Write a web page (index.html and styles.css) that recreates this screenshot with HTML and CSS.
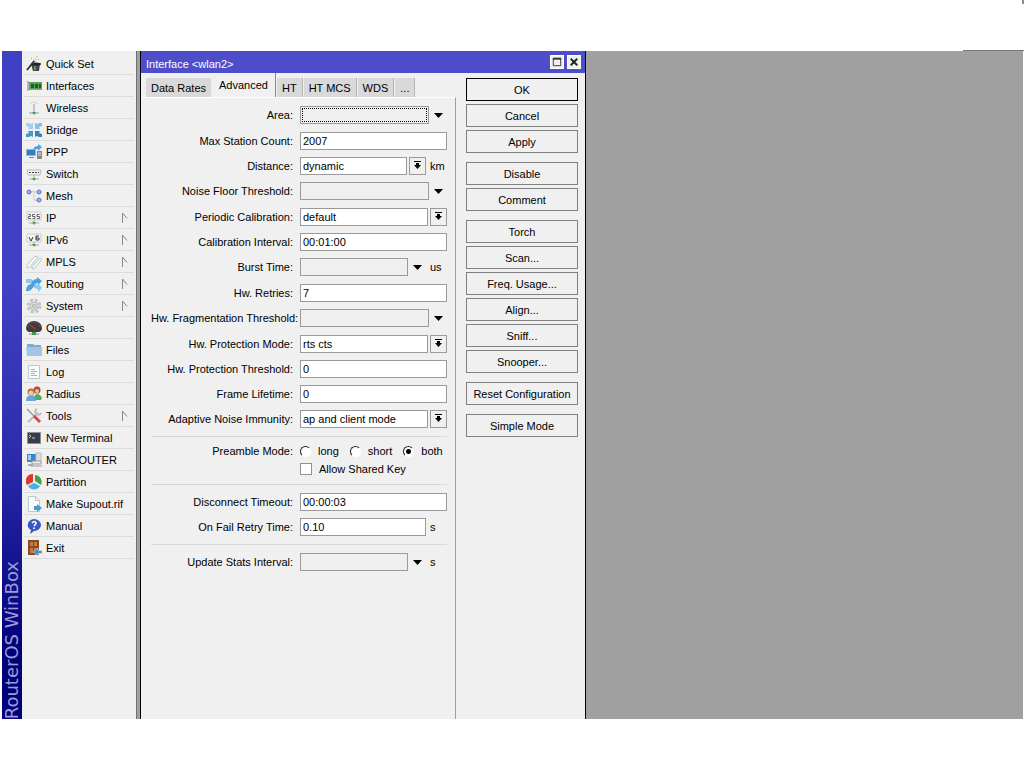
FILE: index.html
```html
<!DOCTYPE html>
<html lang="en">
<head>
    <meta charset="UTF-8">
    <meta name="viewport" content="width=device-width, initial-scale=1.0">
    <title>RouterOS WinBox</title>
    <link rel="stylesheet" href="styles.css">
</head>
<body>
    <svg class="defs" aria-hidden="true">
        <symbol id="drop" viewBox="0 0 9 9">
            <path d="M1 0h7v1H1zM3 2h3v2H3z"/>
            <path d="M1 4h7L4.500 8z"/>
        </symbol>
        <symbol id="down" viewBox="0 0 9 5"><path d="M0 0h9L4.500 5z"/></symbol>
        <symbol id="sub" viewBox="0 0 6 12"><path d="M.5 11V1L5 6.500" fill="none" stroke="#888"/></symbol>
    </svg>
    <header class="top"></header>
    <main class="app">
        <div class="brand"><span>RouterOS WinBox</span></div>
        <nav class="menu">
            <ul>
                <li><a href="#"><svg viewBox="0 0 16 16"><path d="M5 8h9l-1 7H7z" fill="#444"/><ellipse cx="10" cy="8" rx="5" ry="1.500" fill="#222"/><path d="M1 14L9 4" stroke="#333" stroke-width="2"/><path d="M8 5l2-3" stroke="#ddd" stroke-width="2"/><path d="M9 10v4" stroke="#bbb"/><path d="M5 2l1 1M13 3l-1 1M11 0v1" stroke="#c9a640"/></svg>Quick Set</a></li>
                <li><a href="#"><svg viewBox="0 0 16 16"><path d="M1 3h2v10H1z" fill="#b5b5b5"/><path d="M3 4h13v8H3z" fill="#5aa05a"/><path d="M5 6h3v4H5zM9 6h3v4H9zM13 6h2v4h-2z" fill="#1c5d24"/><path d="M4 11.500h11" stroke="#a9c67b" stroke-dasharray="1 1"/></svg>Interfaces</a></li>
                <li><a href="#"><svg viewBox="0 0 16 16"><path d="M8 4v8" stroke="#999"/><path d="M5 4q3-4 6 0" fill="none" stroke="#ccc"/><path d="M3 13h10" stroke="#999"/><path d="M6 12h4l-2 3z" fill="#4a9a5a"/></svg>Wireless</a></li>
                <li><a href="#"><svg viewBox="0 0 16 16"><path d="M0 1h3l2 1 2-1v6H2l1-2-3-1z" fill="#9fd0ee"/><path d="M16 1h-3l-2 1-2-1v6h5l-1-2 3-1z" fill="#86c0e6"/><path d="M0 15h3l2-1 2 1V9H2l1 2-3 1z" fill="#4a97cc"/><path d="M16 15h-3l-2-1-2 1V9h5l-1 2 3 1z" fill="#3583bd"/></svg>Bridge</a></li>
                <li><a href="#"><svg viewBox="0 0 16 16"><path d="M0 5h10v7H0z" fill="#9fb4c8"/><path d="M1 6h8v5H1z" fill="#2f7fc4"/><path d="M3 13h5v1H3z" fill="#888"/><path d="M11 7h5v8h-5z" fill="#888"/><path d="M12 9h3M12 11h3" stroke="#ddd"/><path d="M7 6q1-4 5-4V0l4 3-4 4V5q-3 0-5 1z" fill="#4da3dd"/></svg>PPP</a></li>
                <li><a href="#"><svg viewBox="0 0 16 16"><path d="M1 4h14l-1 5H2z" fill="#f0f0f0" stroke="#bbb"/><path d="M3 6.500h10" stroke="#444" stroke-dasharray="2 1"/><path d="M8 9v4M3 13h10" stroke="#aaa"/><path d="M6 12h4l-2 3z" fill="#4a9a5a"/></svg>Switch</a></li>
                <li><a href="#"><svg viewBox="0 0 16 16"><path d="M4 4l4-1v9l5 1M8 4h4" fill="none" stroke="#ccc"/><g fill="#9fb0ec" stroke="#5a72c8"><circle cx="3" cy="4" r="2"/><circle cx="13" cy="4" r="2"/><circle cx="13" cy="12" r="2"/></g></svg>Mesh</a></li>
                <li><a href="#"><svg viewBox="0 0 16 16"><path d="M1 2h14v8H1z" fill="#f4f4f4" stroke="#ccc"/><path d="M2.500 4.500h2v2h-2v2h2.500M9 4.500H6.500v2H9v2H6.500M13.500 4.500H11v2h2.500v2H11" fill="none" stroke="#666"/><path d="M8 10v3M3 13h10" stroke="#aaa"/><path d="M6 12h4l-2 3z" fill="#4a9a5a"/></svg>IP</a><svg class="sub"><use href="#sub"/></svg></li>
                <li><a href="#"><svg viewBox="0 0 16 16"><path d="M1 2h14v8H1z" fill="#f4f4f4" stroke="#ccc"/><path d="M3 5l2 4 2-4M13 4h-3v4h3V6h-3" fill="none" stroke="#333"/><path d="M8 10v3M3 13h10" stroke="#aaa"/><path d="M6 12h4l-2 3z" fill="#4a9a5a"/></svg>IPv6</a><svg class="sub"><use href="#sub"/></svg></li>
                <li><a href="#"><svg viewBox="0 0 16 16"><path d="M1 11L9 2l3 1-8 10-3 1zM6 13l8-9 2 1-7 9-3 1z" fill="#f4f8f8" stroke="#b5ccc8"/></svg>MPLS</a><svg class="sub"><use href="#sub"/></svg></li>
                <li><a href="#"><svg viewBox="0 0 16 16"><path d="M0 3h5q3 1 4 5l3 1V7l4 5-4 4v-3q-4 0-5-4Q5 7 4 7H0z" fill="#8cc8ee"/><path d="M0 15q0-6 5-7 2-5 6-5V1l5 4-4 4V7q-3 0-4 3-3 6-8 5z" fill="#4a9fdc"/></svg>Routing</a><svg class="sub"><use href="#sub"/></svg></li>
                <li><a href="#"><svg viewBox="0 0 16 16"><circle cx="8" cy="8" r="6" fill="none" stroke="#c4c4c4" stroke-width="3" stroke-dasharray="3 1.700"/><circle cx="8" cy="8" r="4" fill="#d8d8d8" stroke="#bbb"/><circle cx="8" cy="8" r="1.500" fill="#eee" stroke="#aaa"/></svg>System</a><svg class="sub"><use href="#sub"/></svg></li>
                <li><a href="#"><svg viewBox="0 0 16 16"><path d="M0 8a8 7 0 0 1 16 0q0 3-3 4H3Q0 11 0 8z" fill="#443c3c"/><path d="M2 7a6 5 0 0 1 12 0" fill="none" stroke="#888" stroke-dasharray="1 2"/><path d="M4 5l5 4" stroke="#c44"/><path d="M3 14h10" stroke="#888"/><path d="M6 12h4v3H6z" fill="#3a9a4a"/></svg>Queues</a></li>
                <li><a href="#"><svg viewBox="0 0 16 16"><path d="M1 2h6l1 1h7v11H1z" fill="#7fa9cf"/><path d="M0 5h16v9H1z" fill="#a3c5e2"/></svg>Files</a></li>
                <li><a href="#"><svg viewBox="0 0 16 16"><path d="M2.500 1.500h11v13h-11z" fill="#fbfdfd" stroke="#b5cccc"/><path d="M5 5.500h4M5 7.500h6M5 9.500h4M5 11.500h6" stroke="#8ac0c0"/></svg>Log</a></li>
                <li><a href="#"><svg viewBox="0 0 16 16"><path d="M8 14q0-6 3-6t5 4l-1 2z" fill="#4fae58"/><circle cx="11" cy="4" r="3.500" fill="#b8402c"/><circle cx="11" cy="5" r="2" fill="#f0bd94"/><path d="M0 15q0-6 5-6t5 6z" fill="#69a5dc"/><circle cx="5" cy="6" r="3.500" fill="#a07030"/><circle cx="5" cy="7" r="2.500" fill="#f2c99c"/></svg>Radius</a></li>
                <li><a href="#"><svg viewBox="0 0 16 16"><path d="M2 14L12 5" stroke="#bbb" stroke-width="2"/><path d="M11 1a3 3 0 1 0 4 4" fill="none" stroke="#bbb" stroke-width="2"/><path d="M1 1l8 8" stroke="#999" stroke-width="1.500"/><path d="M8 8l6 6" stroke="#d34a4a" stroke-width="3"/></svg>Tools</a><svg class="sub"><use href="#sub"/></svg></li>
                <li><a href="#"><svg viewBox="0 0 16 16"><path d="M1.500 2.500h13v11h-13z" fill="#3a3d48" stroke="#8a8d98"/><path d="M3 5l2 1-2 2M6 8h3" fill="none" stroke="#ccc"/></svg>New Terminal</a></li>
                <li><a href="#"><svg viewBox="0 0 16 16"><path d="M1 2h9v8H1z" fill="#3a86cc"/><path d="M2 3h3v5H2z" fill="#9fd0f4"/><path d="M10 1h5v9h-5z" fill="#ddd" stroke="#bbb"/><path d="M6 9h9v3H6z" fill="#eee" stroke="#999"/><path d="M2 12h5v2H2z" fill="#aaa"/><path d="M5 14h11" stroke="#999"/></svg>MetaROUTER</a></li>
                <li><a href="#"><svg viewBox="0 0 16 16"><path d="M7 8V0a7 7 0 0 0-6 11z" fill="#d9392e"/><path d="M9 7V1a7 7 0 0 1 6 10z" fill="#3aa648"/><path d="M8 9l6 3a7 7 0 0 1-12 0z" fill="#48b0e0"/></svg>Partition</a></li>
                <li><a href="#"><svg viewBox="0 0 16 16"><path d="M2.500.5h7l4 4v11h-11z" fill="#fbfdfd" stroke="#b5cccc"/><path d="M9.500.5v4h4" fill="none" stroke="#b5cccc"/><path d="M8 10h3V8l5 4-5 4v-2H8z" fill="#3f9fcf"/></svg>Make Supout.rif</a></li>
                <li><a href="#"><svg viewBox="0 0 16 16"><path d="M8 1a7 6 0 1 1 0 12l-4 3 1-4A7 6 0 0 1 8 1z" fill="#3558c4"/><path d="M6 5q2.500-3 4 0 0 1-2 3M8 9.500v1.500" fill="none" stroke="#fff" stroke-width="1.700"/></svg>Manual</a></li>
                <li><a href="#"><svg viewBox="0 0 16 16"><path d="M2 0h11v15H2z" fill="#8a4a20"/><path d="M4 2h3v4H4zM8 2h3v4H8zM4 8h3v5H4zM8 8h3v5H8z" fill="#c07a45"/><path d="M16 10.500h-4V8l-5 4 5 4v-2.500h4z" fill="#3c8fc8" stroke="#e8f4fb" stroke-width=".5"/></svg>Exit</a></li>
            </ul>
        </nav>
        <div class="desk">
            <section class="window">
                <div class="title">
                    <h1>Interface &lt;wlan2&gt;</h1>
                    <button type="button" aria-label="Maximize"><svg viewBox="0 0 13 13"><path d="M2.500 2.500h8v8h-8z" fill="none" stroke="#333"/><path d="M2 3h9" stroke="#333" stroke-width="2"/></svg></button>
                    <button type="button" aria-label="Close"><svg viewBox="0 0 13 13"><path d="M3 3l7 7M10 3l-7 7" stroke="#222" stroke-width="2"/></svg></button>
                </div>
                <div class="content">
                    <form class="settings">
                        <div class="tabs">
                            <button type="button">Data Rates</button>
                            <button type="button" class="on">Advanced</button>
                            <button type="button">HT</button>
                            <button type="button">HT MCS</button>
                            <button type="button">WDS</button>
                            <button type="button">...</button>
                        </div>
                        <div class="panel">
                            <div class="row unset">
                                <label for="area">Area:</label>
                                <div class="field"><input id="area" class="focused" type="text"><button type="button" class="arrow" aria-label="Set area"><svg><use href="#down"/></svg></button></div>
                            </div>
                            <div class="row">
                                <label for="maxst">Max Station Count:</label>
                                <div class="field"><input id="maxst" type="text" value="2007"></div>
                            </div>
                            <div class="row">
                                <label for="dist">Distance:</label>
                                <div class="field"><select id="dist"><option>dynamic</option></select><button type="button" class="drop" aria-label="Distance list"><svg><use href="#drop"/></svg></button><span class="unit">km</span></div>
                            </div>
                            <div class="row unset">
                                <label for="noise">Noise Floor Threshold:</label>
                                <div class="field"><input id="noise" type="text"><button type="button" class="arrow" aria-label="Set noise floor"><svg><use href="#down"/></svg></button></div>
                            </div>
                            <div class="row">
                                <label for="percal">Periodic Calibration:</label>
                                <div class="field"><select id="percal"><option>default</option></select><button type="button" class="drop" aria-label="Calibration list"><svg><use href="#drop"/></svg></button></div>
                            </div>
                            <div class="row">
                                <label for="calint">Calibration Interval:</label>
                                <div class="field"><input id="calint" type="text" value="00:01:00"></div>
                            </div>
                            <div class="row unset">
                                <label for="burst">Burst Time:</label>
                                <div class="field"><input id="burst" type="text"><button type="button" class="arrow" aria-label="Set burst time"><svg><use href="#down"/></svg></button><span class="unit">us</span></div>
                            </div>
                            <div class="row">
                                <label for="retries">Hw. Retries:</label>
                                <div class="field"><input id="retries" type="text" value="7"></div>
                            </div>
                            <div class="row unset">
                                <label for="frag">Hw. Fragmentation Threshold:</label>
                                <div class="field"><input id="frag" type="text"><button type="button" class="arrow" aria-label="Set fragmentation threshold"><svg><use href="#down"/></svg></button></div>
                            </div>
                            <div class="row">
                                <label for="pmode">Hw. Protection Mode:</label>
                                <div class="field"><select id="pmode"><option>rts cts</option></select><button type="button" class="drop" aria-label="Protection list"><svg><use href="#drop"/></svg></button></div>
                            </div>
                            <div class="row">
                                <label for="pthr">Hw. Protection Threshold:</label>
                                <div class="field"><input id="pthr" type="text" value="0"></div>
                            </div>
                            <div class="row">
                                <label for="life">Frame Lifetime:</label>
                                <div class="field"><input id="life" type="text" value="0"></div>
                            </div>
                            <div class="row">
                                <label for="immun">Adaptive Noise Immunity:</label>
                                <div class="field"><select id="immun"><option>ap and client mode</option></select><button type="button" class="drop" aria-label="Immunity list"><svg><use href="#drop"/></svg></button></div>
                            </div>
                            <hr>
                            <div class="checks">
                                <div class="row">
                                    <span class="name">Preamble Mode:</span>
                                    <div class="field">
                                        <label><input type="radio" name="preamble">long</label>
                                        <label><input type="radio" name="preamble">short</label>
                                        <label><input type="radio" name="preamble" checked>both</label>
                                    </div>
                                </div>
                                <div class="row">
                                    <span class="name"></span>
                                    <div class="field"><label><input type="checkbox">Allow Shared Key</label></div>
                                </div>
                            </div>
                            <hr>
                            <div class="row">
                                <label for="disc">Disconnect Timeout:</label>
                                <div class="field"><input id="disc" type="text" value="00:00:03"></div>
                            </div>
                            <div class="row">
                                <label for="fail">On Fail Retry Time:</label>
                                <div class="field"><input id="fail" type="text" value="0.10"><span class="unit">s</span></div>
                            </div>
                            <hr>
                            <div class="row unset">
                                <label for="stats">Update Stats Interval:</label>
                                <div class="field"><input id="stats" type="text"><button type="button" class="arrow" aria-label="Set stats interval"><svg><use href="#down"/></svg></button><span class="unit">s</span></div>
                            </div>
                        </div>
                    </form>
                    <div class="actions">
                        <div class="group">
                            <button type="button" class="default">OK</button>
                            <button type="button">Cancel</button>
                            <button type="button">Apply</button>
                        </div>
                        <div class="group">
                            <button type="button">Disable</button>
                            <button type="button">Comment</button>
                        </div>
                        <div class="group">
                            <button type="button">Torch</button>
                            <button type="button">Scan...</button>
                            <button type="button">Freq. Usage...</button>
                            <button type="button">Align...</button>
                            <button type="button">Sniff...</button>
                            <button type="button">Snooper...</button>
                        </div>
                        <div class="group"><button type="button">Reset Configuration</button></div>
                        <div class="group"><button type="button">Simple Mode</button></div>
                    </div>
                </div>
            </section>
        </div>
    </main>
</body>
</html>
```
FILE: styles.css
```css
* {margin: 0; padding: 0; box-sizing: border-box;}
ul, li {list-style: none;}
a {text-decoration: none; color: inherit;}
svg {display: block; flex: none;}
.defs {display: none;}

body {min-height: 100vh; display: flex; flex-direction: column; padding-bottom: 55px;
      background-color: #fff; color: #000; font: 11px/14px "Liberation Sans", Arial, sans-serif;}
button, input, select {font: inherit; color: inherit; appearance: none; border-radius: 0;}

.top {position: relative; height: 51px;}
.top::before {content: ""; position: absolute; right: 0; top: 0; width: 2px; height: 4px; background-color: #8888a8;}
.top::after {content: ""; position: absolute; right: 0; bottom: 0; width: 61px; height: 1px; background-color: #777;}

.app {flex: 1; display: flex; padding: 0 1px 0 2px;}
.brand {width: 20px; display: flex; align-items: flex-end; justify-content: center;
        background: linear-gradient(#4040c4 0%, #4040c4 35%, #2c2cac 60%, #00007c 90%);}
.brand span {writing-mode: vertical-rl; transform: rotate(180deg); white-space: nowrap;
             font: 18px/20px "DejaVu Sans", sans-serif; color: #9c9cd0;}

.menu {width: 114px; padding: 2px 2px 0; background-color: #f0f0f0;}
.menu li {display: flex; align-items: center; justify-content: space-between; height: 22px;
          border-bottom: 1px solid #dcdcdc; padding: 0 6px 0 2px;}
.menu a {display: flex; align-items: center; gap: 4px; white-space: nowrap;}
.menu a svg {width: 16px; height: 16px;}
.menu .sub {width: 6px; height: 12px;}

.desk {flex: 1; display: flex; background-color: #a0a0a0; border-left: 1px solid #707070; padding-left: 3px;}
.window {width: 446px; display: flex; flex-direction: column; background-color: #f0f0f0;
         border: solid #000; border-width: 0 1px;}
.title {display: flex; align-items: center; gap: 3px; height: 22px; padding: 0 4px 0 5px; background-color: #4e4ecb; color: #fff;}
.title h1 {flex: 1; font: inherit; padding-top: 3px;}
.title button {width: 14px; height: 14px; border: 1px solid #fff; background-color: #f0f0f0;}
.title button svg {width: 12px; height: 12px;}

.content {flex: 1; display: flex;}
.settings {flex: 1; min-width: 0; display: flex; flex-direction: column;}
.tabs {display: flex; align-items: flex-end; height: 24px; padding-left: 5px; gap: 1px;}
.tabs button {height: 19px; padding: 0 5px; border: 0; border-right: 1px solid #b4b4b4; background-color: #d9d9d9;}
.tabs button.on {height: 24px; padding: 0 7px; border-right: 1px solid #888; background-color: #f0f0f0;}
.tabs button:first-child {border-right: 0;}

.panel {flex: 1; display: flex; flex-direction: column; gap: 6px; padding: 7px 8px 0 10px;
        border-top: 1px solid #fff; border-right: 1px solid #a0a0a0;}
.row {display: flex; align-items: center; height: 19px;}
.row.unset {height: 20px;}
.row > label, .row .name {width: 142px; flex: none; text-align: right; white-space: nowrap;}
.row .field {flex: 1; display: flex; align-items: center; min-width: 0; margin-left: 7px;}
.field input[type="text"], .field select {flex: 1; min-width: 0; width: 0; height: 18px; padding: 0 2px;
                                           border: 1px solid #9a9a9a; background-color: #fff; line-height: 16px;}
.row.unset input {background-color: #efefef;}
.row.unset input.focused {outline: 1px dotted #000; outline-offset: -3px;}
.drop {width: 17px; height: 18px; margin-left: 2px; display: flex; align-items: center; justify-content: center;
       border: 1px solid #9a9a9a; background-color: #f0f0f0;}
.drop svg {width: 9px; height: 9px;}
.arrow {width: 18px; height: 18px; display: flex; align-items: center; justify-content: center; border: 0; background: none;}
.arrow svg {width: 9px; height: 5px;}
.unit {width: 17px; margin-left: 4px;}
hr {border: 0; border-top: 1px solid #d9d9d9; margin: 2px 0 1px;}

.checks {display: flex; flex-direction: column; gap: 4px;}
.checks .row {height: 14px;}
.checks .field {gap: 11px;}
.checks label {display: flex; align-items: center; gap: 7px; white-space: nowrap;}
.checks input {width: 11px; height: 11px; background-color: #fff;}
.checks input[type="radio"] {border: 1px solid #fff; border-color: #222 #fff #fff #222; border-radius: 50%;}
.checks input[type="radio"]:checked {background-image: radial-gradient(#000 0 2px, transparent 3px);}
.checks input[type="checkbox"] {width: 12px; height: 12px; border: 1px solid #909090;}

.actions {width: 129px; flex: none; display: flex; flex-direction: column; gap: 9px; padding: 5px 7px 0 10px;}
.actions .group {display: flex; flex-direction: column; gap: 3px;}
.actions button {height: 23px; border: 1px solid #808080; background-color: #f0f0f0; white-space: nowrap;}
.actions .default {border-color: #000;}
```
